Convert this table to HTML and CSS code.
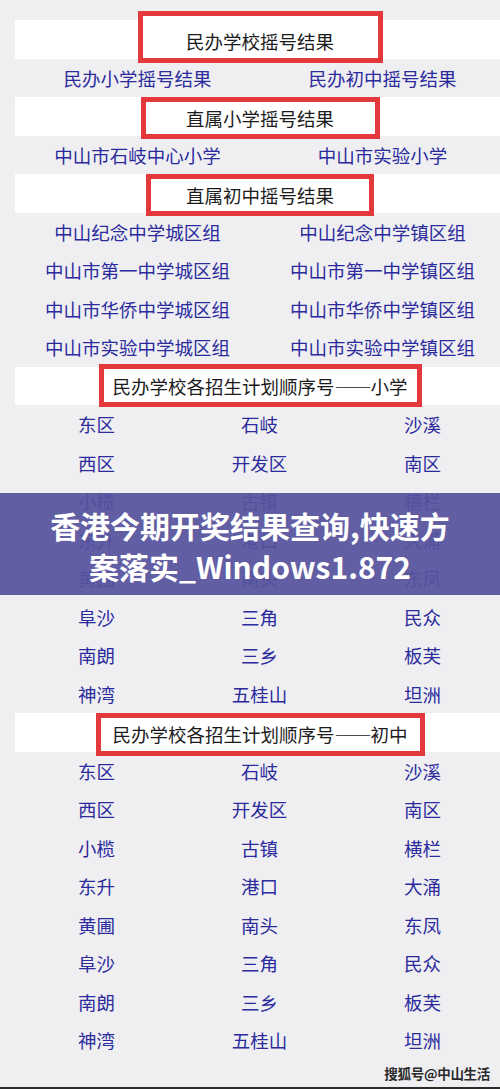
FILE: index.html
```html
<!DOCTYPE html>
<html lang="zh-CN">
<head>
<meta charset="utf-8">
<title>中山摇号结果</title>
<link rel="stylesheet" href="styles.css">
</head>
<body>
<div class="page">
  <div class="content">
    <div class="strip"><div class="box box-1">民办学校摇号结果</div></div>
    <div class="row two">
      <span class="link">民办小学摇号结果</span>
      <span class="link">民办初中摇号结果</span>
    </div>
    <div class="strip"><div class="box box-2">直属小学摇号结果</div></div>
    <div class="row two">
      <span class="link">中山市石岐中心小学</span>
      <span class="link">中山市实验小学</span>
    </div>
    <div class="strip"><div class="box box-3">直属初中摇号结果</div></div>
    <div class="row two">
      <span class="link">中山纪念中学城区组</span>
      <span class="link">中山纪念中学镇区组</span>
    </div>
    <div class="row two">
      <span class="link">中山市第一中学城区组</span>
      <span class="link">中山市第一中学镇区组</span>
    </div>
    <div class="row two">
      <span class="link">中山市华侨中学城区组</span>
      <span class="link">中山市华侨中学镇区组</span>
    </div>
    <div class="row two">
      <span class="link">中山市实验中学城区组</span>
      <span class="link">中山市实验中学镇区组</span>
    </div>
    <div class="strip"><div class="box box-4">民办学校各招生计划顺序号<span class="dash">——</span>小学</div></div>
    <div class="grid3">
      <span class="link">东区</span><span class="link">石岐</span><span class="link">沙溪</span>
      <span class="link">西区</span><span class="link">开发区</span><span class="link">南区</span>
      <span class="link">小榄</span><span class="link">古镇</span><span class="link">横栏</span>
      <span class="link">东升</span><span class="link">港口</span><span class="link">大涌</span>
      <span class="link">黄圃</span><span class="link">南头</span><span class="link">东凤</span>
      <span class="link">阜沙</span><span class="link">三角</span><span class="link">民众</span>
      <span class="link">南朗</span><span class="link">三乡</span><span class="link">板芙</span>
      <span class="link">神湾</span><span class="link">五桂山</span><span class="link">坦洲</span>
    </div>
    <div class="strip"><div class="box box-5">民办学校各招生计划顺序号<span class="dash">——</span>初中</div></div>
    <div class="grid3">
      <span class="link">东区</span><span class="link">石岐</span><span class="link">沙溪</span>
      <span class="link">西区</span><span class="link">开发区</span><span class="link">南区</span>
      <span class="link">小榄</span><span class="link">古镇</span><span class="link">横栏</span>
      <span class="link">东升</span><span class="link">港口</span><span class="link">大涌</span>
      <span class="link">黄圃</span><span class="link">南头</span><span class="link">东凤</span>
      <span class="link">阜沙</span><span class="link">三角</span><span class="link">民众</span>
      <span class="link">南朗</span><span class="link">三乡</span><span class="link">板芙</span>
      <span class="link">神湾</span><span class="link">五桂山</span><span class="link">坦洲</span>
    </div>
  </div>
  <div class="footer">
    <span class="watermark">搜狐号@中山生活</span>
  </div>
  <div class="bottom-line"></div>

  <div class="title-band">
    <span class="title-line">香港今期开奖结果查询,快速方</span>
    <span class="title-line">案落实_Windows1.872</span>
  </div>
</div>
</body>
</html>
```

FILE: styles.css
```css
html, body {
  margin: 0;
  padding: 0;
}

body {
  background: #efeff1;
  font-family: "Noto Sans CJK SC", "Noto Sans", sans-serif;
  overflow: hidden;
  width: 500px;
  height: 1089px;
}

.page {
  position: relative;
  width: 500px;
  height: 1089px;
  overflow: hidden;
}

.content {
  margin-left: 15px;
  width: 490px;
  padding-top: 20px;
}

.strip {
  height: 38.5px;
  background: #ffffff;
  display: flex;
  justify-content: center;
  align-items: center;
}

.box {
  box-sizing: border-box;
  border: 5px solid #e4393c;
  background: #ffffff;
  display: flex;
  justify-content: center;
  align-items: center;
  font-size: 18.5px;
  color: #1c1c1c;
  white-space: nowrap;
  flex-shrink: 0;
}

.box-1 { width: 245px; height: 52px; margin-top: -4px; padding-top: 8px; }
.box-2 { width: 239px; height: 42px; margin-top: 3px; }
.box-3 { width: 228px; height: 42px; margin-top: 3px; }
.box-4 { width: 323px; height: 43px; }
.box-5 { width: 329px; height: 43px; margin-top: 4px; }

.dash {
  font-feature-settings: "fwid" 1;
  letter-spacing: -1px;
}

.row {
  height: 38.5px;
}

.two {
  display: grid;
  grid-template-columns: 245px 245px;
}

.grid3 {
  display: grid;
  grid-template-columns: repeat(3, 163px);
  grid-auto-rows: 38.5px;
}

.link {
  display: flex;
  justify-content: center;
  align-items: center;
  font-size: 18.5px;
  color: #2b2b9e;
  white-space: nowrap;
}

.footer {
  display: flex;
  justify-content: flex-end;
  padding-right: 10px;
  height: 27px;
  align-items: center;
}

.watermark {
  font-size: 13.5px;
  font-weight: 700;
  color: #2a2a2a;
  letter-spacing: -0.3px;
}

.bottom-line {
  height: 2px;
  background: #2b2b2b;
}

.title-band {
  position: absolute;
  left: 0;
  top: 493px;
  width: 500px;
  height: 102px;
  box-sizing: border-box;
  padding-top: 12px;
  background: rgba(86, 83, 158, 0.93);
  display: flex;
  flex-direction: column;
  align-items: center;
}

.title-line {
  display: block;
  font-size: 30px;
  font-weight: 700;
  line-height: 41px;
  color: #ffffff;
  white-space: nowrap;
}
```
